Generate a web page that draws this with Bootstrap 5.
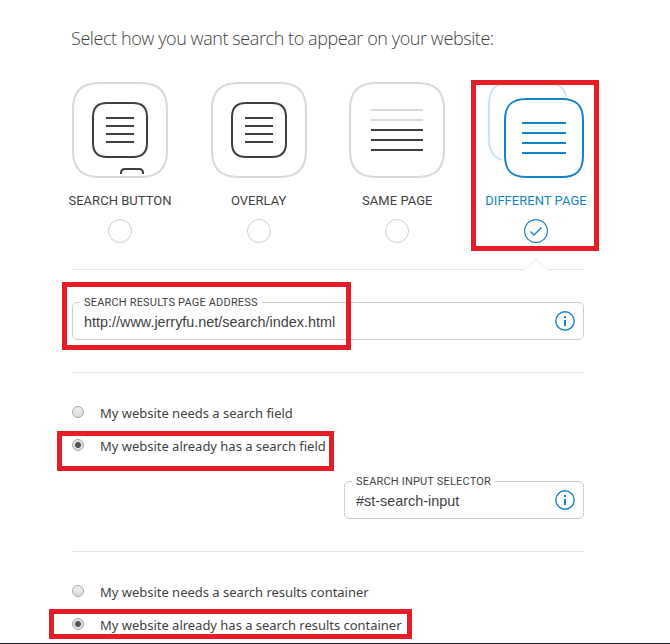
<!DOCTYPE html>
<html lang="en">
<head>
<meta charset="utf-8">
<meta name="viewport" content="width=device-width, initial-scale=1">
<title>Search appearance</title>
<link href="https://cdn.jsdelivr.net/npm/bootstrap@5.3.0/dist/css/bootstrap.min.css" rel="stylesheet">
<style>
body{font-family:"Noto Sans","Open Sans",sans-serif;color:#3f3f41;background:#fff;height:644px;overflow:hidden;font-size:13px;line-height:20px}
.page{height:644px;border-bottom:1px solid #1d1f22}
.setup{width:512px;margin-left:72px;padding-top:24px}
.heading{font-family:"Open Sans",sans-serif;font-size:18px;font-weight:300;line-height:28px;margin:0 0 30px -1px;white-space:nowrap;letter-spacing:-.42px}
.option{width:96px;height:162px}
.option-name{font-family:Roboto,sans-serif;font-size:13px;line-height:20px;margin:13px 0 8px;white-space:nowrap;color:#3f3f41;letter-spacing:.03px}
.tile{display:block;fill:none;stroke:#3f3f41;stroke-width:2}
.tile .faint{stroke:#d9d9d9}
.tick{display:block;fill:none;stroke:#cfcfcf;flex:none}
.active-option .option-name{color:#1583c9}
.active-option .tile,.active-option .tick{stroke:#1583c9}
.active-option .tile .faint{stroke:#cbe4f4}
.marker{position:absolute;border:5px solid #e71d25;pointer-events:none}
.notch{display:block;margin-top:14px;fill:none;stroke:#e8e8e8}
.rule{height:1px;background:#e8e8e8}
.entry{height:38px;border:1px solid #cfcfcf;border-radius:5px;padding:0 8px 0 11px}
.entry-name{position:absolute;left:7px;top:-8px;background:#fff;padding:0 4px;font-family:Roboto,sans-serif;font-size:11px;line-height:16px;white-space:nowrap;letter-spacing:.18px}
.entry-value{font-family:"Liberation Sans",Arial,sans-serif;font-size:14.4px;line-height:20px;padding-top:2px}
.choice{height:33px;white-space:nowrap;letter-spacing:-.02px}
.choice-text{margin-top:-2px}
.choice-dot{width:12px;height:12px;border:1px solid #a5a5a5;border-radius:50%;background:linear-gradient(#eee,#dcdcdc);margin-right:16px;flex:none;margin-top:-3px}
.choice-dot.on{background:radial-gradient(circle,#555 0 2.6px,#e3e3e3 3.4px)}
</style>
</head>
<body>
<main class="page">
<div class="setup">
  <h1 class="heading">Select how you want search to appear on your website:</h1>
  <div class="d-flex justify-content-between">
    <div class="option d-flex flex-column align-items-center">
      <svg class="tile" width="96" height="96" viewBox="0 0 96 96"><path class="faint" d="M1 27C1 10 10 1 27 1H69C86 1 95 10 95 27V69C95 86 86 95 69 95H27C10 95 1 86 1 69Z"/><path d="M21 35C21 25.500 25.500 21 35 21H61C70.500 21 75 25.500 75 35V61C75 70.500 70.500 75 61 75H35C25.500 75 21 70.500 21 61ZM34 36H62M34 44H62M34 52H62M34 60H62M49 92V91Q49 87 53 87H67Q71 87 71 91V92"/></svg>
      <div class="option-name">SEARCH BUTTON</div>
      <svg class="tick" width="24" height="24"><circle cx="12" cy="12" r="11.5"/></svg>
    </div>
    <div class="option d-flex flex-column align-items-center">
      <svg class="tile" width="96" height="96" viewBox="0 0 96 96"><path class="faint" d="M1 27C1 10 10 1 27 1H69C86 1 95 10 95 27V69C95 86 86 95 69 95H27C10 95 1 86 1 69Z"/><path d="M21 35C21 25.500 25.500 21 35 21H61C70.500 21 75 25.500 75 35V61C75 70.500 70.500 75 61 75H35C25.500 75 21 70.500 21 61ZM34 36H62M34 44H62M34 52H62M34 60H62"/></svg>
      <div class="option-name">OVERLAY</div>
      <svg class="tick" width="24" height="24"><circle cx="12" cy="12" r="11.5"/></svg>
    </div>
    <div class="option d-flex flex-column align-items-center">
      <svg class="tile" width="96" height="96" viewBox="0 0 96 96"><path class="faint" d="M1 27C1 10 10 1 27 1H69C86 1 95 10 95 27V69C95 86 86 95 69 95H27C10 95 1 86 1 69ZM22 28H74M22 38H74"/><path d="M22 48H74M22 58H74M22 68H74"/></svg>
      <div class="option-name">SAME PAGE</div>
      <svg class="tick" width="24" height="24"><circle cx="12" cy="12" r="11.5"/></svg>
    </div>
    <div class="option active-option position-relative d-flex flex-column align-items-center">
      <svg class="tile" width="96" height="96" viewBox="0 0 96 96"><path class="faint" d="M14 78C4 75 1 67 1 57V22C1 7 8 1 22 1H58C70 1 76 5 78 14"/><path d="M17 38C17 23.500 23.500 17 38 17H74C88.500 17 95 23.500 95 38V74C95 88.500 88.500 95 74 95H38C23.500 95 17 88.500 17 74ZM34 41H78M34 51H78M34 61H78M34 71H78"/></svg>
      <div class="option-name">DIFFERENT PAGE</div>
      <svg class="tick" width="24" height="24"><circle cx="12" cy="12" r="11.4" stroke-width="1.2"/><path d="M6.5 12.5L10 16L17.500 8.500" stroke-width="1.4"/></svg>
      <div class="marker" style="left:-17px;top:-2px;width:128px;height:171px"></div>
    </div>
  </div>
  <svg class="notch" width="512" height="12"><path d="M0 11.500H453L464 .7L475 11.500H512"/></svg>
  <div class="entry position-relative d-flex align-items-center justify-content-between" style="margin-top:32px">
    <span class="entry-name">SEARCH RESULTS PAGE ADDRESS</span>
    <span class="entry-value">http://www.jerryfu.net/search/index.html</span>
    <svg width="20" height="20" fill="none" stroke="#1583c9"><circle cx="10" cy="10" r="9.2" stroke-width="1.4"/><path d="M10 5V7M10 9V15" stroke-width="2"/></svg>
    <div class="marker" style="left:-11px;top:-21px;width:289px;height:68px"></div>
  </div>
  <div class="rule" style="margin:32px 0 24px"></div>
  <div class="choice d-flex align-items-center"><span class="choice-dot"></span><span class="choice-text">My website needs a search field</span></div>
  <div class="choice position-relative d-flex align-items-center"><span class="choice-dot on"></span><span class="choice-text">My website already has a search field</span>
    <div class="marker" style="left:-15px;top:1px;width:277px;height:40px"></div>
  </div>
  <div class="entry position-relative d-flex align-items-center justify-content-between ms-auto" style="width:240px;margin-top:18px">
    <span class="entry-name">SEARCH INPUT SELECTOR</span>
    <span class="entry-value">#st-search-input</span>
    <svg width="20" height="20" fill="none" stroke="#1583c9"><circle cx="10" cy="10" r="9.2" stroke-width="1.4"/><path d="M10 5V7M10 9V15" stroke-width="2"/></svg>
  </div>
  <div class="rule" style="margin:32px 0 24px"></div>
  <div class="choice d-flex align-items-center"><span class="choice-dot"></span><span class="choice-text">My website needs a search results container</span></div>
  <div class="choice position-relative d-flex align-items-center"><span class="choice-dot on"></span><span class="choice-text">My website already has a search results container</span>
    <div class="marker" style="left:-23px;top:0;width:363px;height:30px"></div>
  </div>
</div>
</main>
<script src="https://cdn.jsdelivr.net/npm/bootstrap@5.3.0/dist/js/bootstrap.bundle.min.js"></script>
</body>
</html>
